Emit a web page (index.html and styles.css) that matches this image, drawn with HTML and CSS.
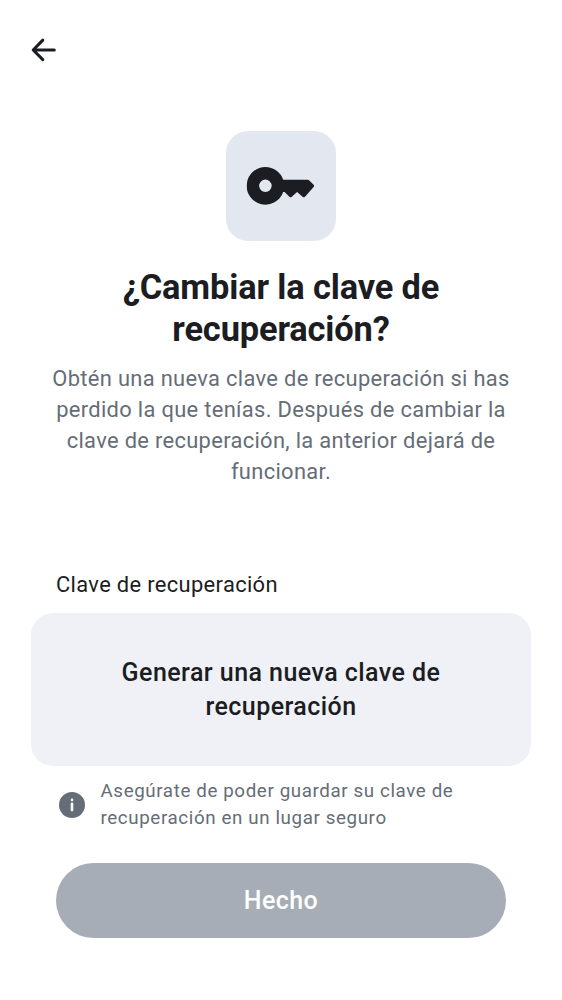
FILE: index.html
```html
<!DOCTYPE html>
<html lang="es">
<head>
<meta charset="utf-8">
<title>Clave de recuperación</title>
<link rel="stylesheet" href="styles.css">
</head>
<body>
<main class="screen">
  <header class="topbar">
    <svg class="back" viewBox="0 0 26 26"><path d="M23.3 13H2.6M11.8 3.1 2.2 13 11.8 22.6"/></svg>
  </header>
  <section class="hero">
    <div class="tile">
      <svg class="key" viewBox="0 0 68 38"><path fill-rule="evenodd" d="M18.8 0a18.8 18.8 0 1 0 17.8 25H38l4.8 4.8q1.2 1 2.4 0l5.3-4.7 5.7 4.8q1.2.9 2.2-.1L67 20q.9-1.1 0-2.2l-4.3-4.4q-.7-.7-1.6-.7H36.6A18.8 18.8 0 0 0 18.8 0Zm0 12.6a6.25 6.25 0 1 1 0 12.5 6.25 6.25 0 0 1 0-12.5Z"/></svg>
    </div>
    <h1 class="title">¿Cambiar la clave de<br>recuperación?</h1>
    <p class="subtitle">Obtén una nueva clave de recuperación si has<br>perdido la que tenías. Después de cambiar la<br>clave de recuperación, la anterior dejará de<br>funcionar.</p>
  </section>
  <section class="recovery">
    <div class="label">Clave de recuperación</div>
    <button class="generate">Generar una nueva clave de<br>recuperación</button>
    <div class="hint">
      <svg class="info" viewBox="0 0 26 26"><circle cx="13" cy="13" r="13"/><path d="M13 11.9v6.2M13 7.9v.1"/></svg>
      <p class="hint-text">Asegúrate de poder guardar su clave de<br>recuperación en un lugar seguro</p>
    </div>
  </section>
  <button class="done">Hecho</button>
</main>
</body>
</html>
```
FILE: styles.css
```css
* { box-sizing: border-box; }
body { margin: 0; background: #fff; color: #1b1d22; font-family: Roboto, sans-serif; }
button { font: inherit; border: 0; display: block; }
.screen { width: 562px; height: 1000px; display: flex; flex-direction: column; }
.topbar { height: 131px; padding: 37px 31px 0; }
.back { display: block; width: 26px; height: 26px; fill: none; stroke: #1b1d22; stroke-width: 3; stroke-linecap: round; stroke-linejoin: round; }
.hero { display: flex; flex-direction: column; align-items: center; text-align: center; }
.tile { width: 109.5px; height: 109.5px; border-radius: 22px; background: #e3e8f0; display: grid; place-items: center; }
.key { width: 68px; height: 38px; fill: #1b1d22; transform: translateX(-.4px); }
.title { margin: 25px 0 0; font-size: 34.4px; line-height: 42px; font-weight: 700; letter-spacing: -.14px; white-space: nowrap; }
.subtitle { margin: 13px 0 0; font-size: 21.9px; line-height: 31.1px; letter-spacing: .32px; color: #656d77; white-space: nowrap; }
.recovery { margin-top: 81.4px; padding: 0 31px; }
.label { padding-left: 25px; font-size: 21.9px; line-height: 34px; letter-spacing: .34px; }
.generate { width: 100%; height: 153px; margin-top: 11px; border-radius: 22px; background: #f0f1f6; color: #1b1d22; font-size: 25px; line-height: 34px; font-weight: 500; letter-spacing: .45px; }
.hint { display: flex; align-items: center; gap: 15.5px; padding: 12px 0 0 28px; }
.info { width: 26px; height: 26px; fill: #656d77; }
.info path { fill: none; stroke: #fff; stroke-width: 2.6; stroke-linecap: round; }
.hint-text { margin: 0; font-size: 18.75px; line-height: 26.6px; letter-spacing: .61px; color: #656d77; white-space: nowrap; }
.done { width: 450px; height: 75px; margin: 31.4px 56px 0; border-radius: 38px; background: #a6adb7; color: #fff; font-size: 25px; font-weight: 500; letter-spacing: .45px; }
```
